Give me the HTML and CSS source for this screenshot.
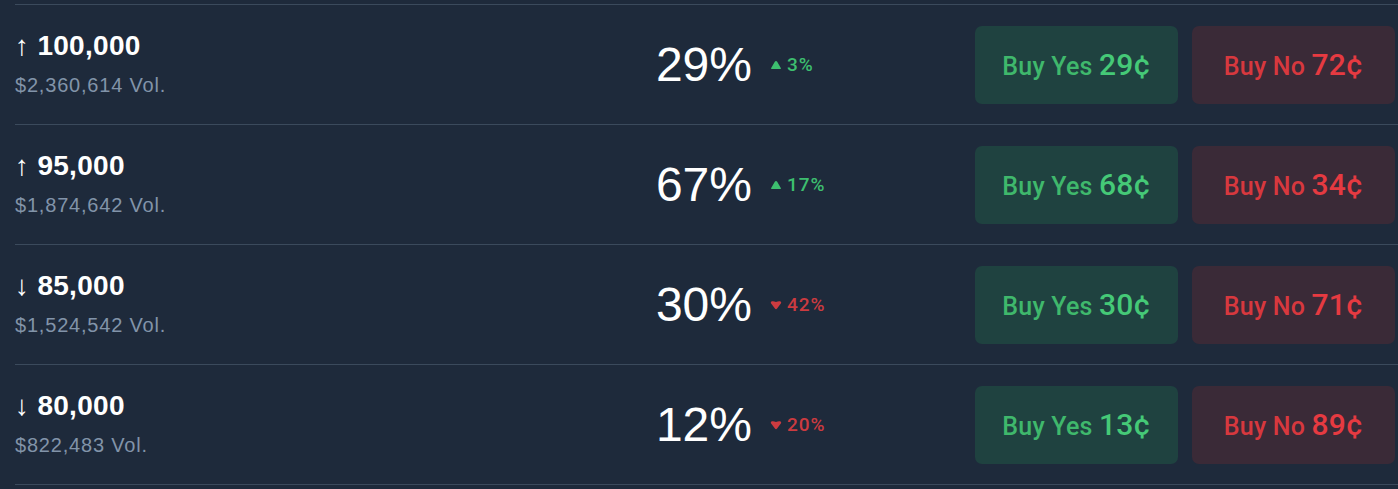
FILE: index.html
```html
<!DOCTYPE html>
<html lang="en">
<head>
    <meta charset="UTF-8">
    <title>Markets</title>
    <link rel="stylesheet" href="styles.css">
</head>
<body>
    <div class="market-list">
        <div class="market-row">
            <div class="market-info">
                <div class="market-title">↑ 100,000</div>
                <div class="market-vol">$2,360,614 Vol.</div>
            </div>
            <div class="market-odds">
                <span class="odds-value">29%</span>
                <span class="odds-change up">
                    <svg viewBox="0 0 10 10"><path d="M5 1.6 Q5.6 1.6 6 2.3 L9 7.4 Q9.4 8.4 8.3 8.4 L1.7 8.4 Q0.6 8.4 1 7.4 L4 2.3 Q4.4 1.6 5 1.6 Z"/></svg>3%
                </span>
            </div>
            <div class="market-actions">
                <button class="buy-btn yes">Buy Yes <span class="price">29¢</span></button>
                <button class="buy-btn no">Buy No <span class="price">72¢</span></button>
            </div>
        </div>
        <div class="market-row">
            <div class="market-info">
                <div class="market-title">↑ 95,000</div>
                <div class="market-vol">$1,874,642 Vol.</div>
            </div>
            <div class="market-odds">
                <span class="odds-value">67%</span>
                <span class="odds-change up">
                    <svg viewBox="0 0 10 10"><path d="M5 1.6 Q5.6 1.6 6 2.3 L9 7.4 Q9.4 8.4 8.3 8.4 L1.7 8.4 Q0.6 8.4 1 7.4 L4 2.3 Q4.4 1.6 5 1.6 Z"/></svg>17%
                </span>
            </div>
            <div class="market-actions">
                <button class="buy-btn yes">Buy Yes <span class="price">68¢</span></button>
                <button class="buy-btn no">Buy No <span class="price">34¢</span></button>
            </div>
        </div>
        <div class="market-row">
            <div class="market-info">
                <div class="market-title">↓ 85,000</div>
                <div class="market-vol">$1,524,542 Vol.</div>
            </div>
            <div class="market-odds">
                <span class="odds-value">30%</span>
                <span class="odds-change down">
                    <svg viewBox="0 0 10 10"><path d="M5 8.6 Q5.5 8.6 5.9 8 L9.2 3.6 Q9.8 2.4 8.4 1.9 Q7 1.5 5 2.6 Q3 1.5 1.6 1.9 Q0.2 2.4 0.8 3.6 L4.1 8 Q4.5 8.6 5 8.6 Z"/></svg>42%
                </span>
            </div>
            <div class="market-actions">
                <button class="buy-btn yes">Buy Yes <span class="price">30¢</span></button>
                <button class="buy-btn no">Buy No <span class="price">71¢</span></button>
            </div>
        </div>
        <div class="market-row">
            <div class="market-info">
                <div class="market-title">↓ 80,000</div>
                <div class="market-vol">$822,483 Vol.</div>
            </div>
            <div class="market-odds">
                <span class="odds-value">12%</span>
                <span class="odds-change down">
                    <svg viewBox="0 0 10 10"><path d="M5 8.6 Q5.5 8.6 5.9 8 L9.2 3.6 Q9.8 2.4 8.4 1.9 Q7 1.5 5 2.6 Q3 1.5 1.6 1.9 Q0.2 2.4 0.8 3.6 L4.1 8 Q4.5 8.6 5 8.6 Z"/></svg>20%
                </span>
            </div>
            <div class="market-actions">
                <button class="buy-btn yes">Buy Yes <span class="price">13¢</span></button>
                <button class="buy-btn no">Buy No <span class="price">89¢</span></button>
            </div>
        </div>
    </div>
</body>
</html>
```

FILE: styles.css
```css
body {
    margin: 0;
    background-color: #1e2a3b;
    font-family: 'Liberation Sans', Arial, sans-serif;
    color: #ffffff;
}

.market-list {
    margin-left: 15px;
    padding-top: 4px;
}

.market-row {
    display: flex;
    align-items: center;
    height: 119px;
    border-top: 1px solid #3b4a5c;
    padding-right: 3px;
}

.market-row:last-child {
    border-bottom: 1px solid #3b4a5c;
}

/* Left column: strike and volume */
.market-info {
    width: 560px;
    display: flex;
    flex-direction: column;
    gap: 12px;
    margin-top: -2px;
}

.market-title {
    font-size: 28px;
    line-height: 32px;
    font-weight: bold;
    letter-spacing: 0.3px;
    color: #ffffff;
}

.market-vol {
    font-size: 20px;
    line-height: 23px;
    letter-spacing: 0.8px;
    color: #8294a9;
}

/* Middle column: chance and change */
.market-odds {
    flex: 1;
    display: flex;
    align-items: center;
}

.odds-value {
    width: 177px;
    text-align: right;
    font-size: 48px;
    line-height: 56px;
    color: #ffffff;
}

.odds-change {
    margin-left: 18px;
    margin-top: 1px;
    display: flex;
    align-items: center;
    font-family: 'Roboto', 'Liberation Sans', sans-serif;
    font-size: 19px;
    font-weight: 500;
    line-height: 20px;
    letter-spacing: 1px;
}

.odds-change svg {
    width: 12px;
    height: 12px;
    margin-right: 5px;
}

.odds-change.up {
    color: #3dbe6f;
}

.odds-change.up svg {
    fill: #3dbe6f;
}

.odds-change.down {
    color: #cc3b40;
}

.odds-change.down svg {
    fill: #cc3b40;
}

/* Right column: buy buttons */
.market-actions {
    display: flex;
    gap: 14px;
}

.buy-btn {
    width: 203px;
    height: 78px;
    border: none;
    border-radius: 7px;
    font-family: 'Roboto', 'Liberation Sans', sans-serif;
    font-size: 25px;
    font-weight: 500;
    letter-spacing: 0.2px;
    cursor: pointer;
}

.buy-btn .price {
    font-size: 30px;
}

.buy-btn.yes {
    background-color: #1f4240;
    color: #3fb86c;
}

.buy-btn.yes .price {
    color: #45c977;
}

.buy-btn.no {
    background-color: #3a2a37;
    color: #d7383e;
}

.buy-btn.no .price {
    color: #e63a41;
}
```
